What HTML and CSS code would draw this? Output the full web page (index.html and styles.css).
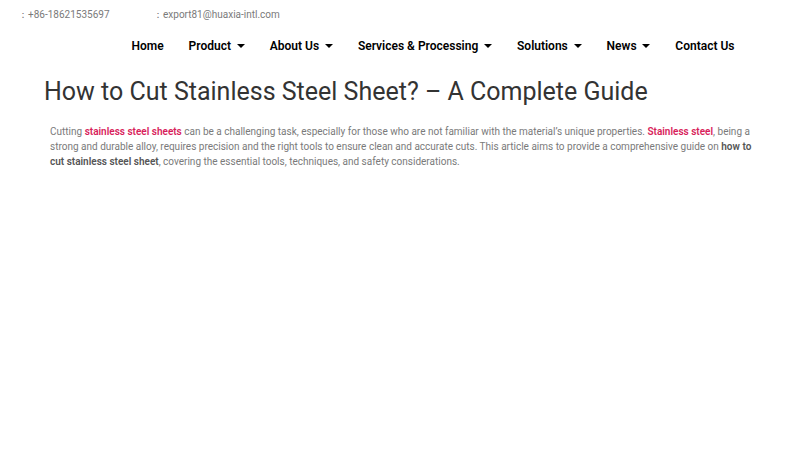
FILE: index.html
```html
<!DOCTYPE html>
<html lang="en">
<head>
    <meta charset="UTF-8">
    <meta name="viewport" content="width=device-width, initial-scale=1.0">
    <title>How to Cut Stainless Steel Sheet? – A Complete Guide</title>
    <link rel="stylesheet" href="styles.css">
</head>
<body>

<div class="topbar">
    <span class="contact phone">：+86-18621535697</span>
    <span class="contact mail">：export81@huaxia-intl.com</span>
</div>

<nav class="menu">
    <a class="menu-item" href="#">Home</a>
    <a class="menu-item" href="#">Product <span class="caret"></span></a>
    <a class="menu-item" href="#">About Us <span class="caret"></span></a>
    <a class="menu-item" href="#">Services &amp; Processing <span class="caret"></span></a>
    <a class="menu-item" href="#">Solutions <span class="caret"></span></a>
    <a class="menu-item" href="#">News <span class="caret"></span></a>
    <a class="menu-item" href="#">Contact Us</a>
</nav>

<div class="post">
    <h1 class="post-title">How to Cut Stainless Steel Sheet? – A Complete Guide</h1>
    <p class="post-text">Cutting <a href="#" class="hl">stainless steel sheets</a> can be a challenging task, especially for those who are not familiar with the material’s unique properties. <a href="#" class="hl">Stainless steel</a>, being a strong and durable alloy, requires precision and the right tools to ensure clean and accurate cuts. This article aims to provide a comprehensive guide on <strong>how to cut stainless steel sheet</strong>, covering the essential tools, techniques, and safety considerations.</p>
</div>

</body>
</html>
```

FILE: styles.css
```css
body {
    font-family: Roboto, "Liberation Sans", sans-serif;
    margin: 0;
    background: #fff;
}
.topbar {
    display: flex;
    height: 29px;
    align-items: center;
    padding-left: 18px;
    font-size: 10px;
    color: #7a7a7a;
}
.contact.phone {
    width: 135px;
}
.menu {
    display: flex;
    justify-content: flex-end;
    padding-right: 53px;
    height: 34px;
    align-items: center;
}
.menu-item {
    color: #000;
    text-decoration: none;
    font-size: 12px;
    font-weight: 600;
    padding: 0 12.5px;
    display: flex;
    align-items: center;
}
.caret {
    display: inline-block;
    width: 0;
    height: 0;
    border-left: 4px solid transparent;
    border-right: 4px solid transparent;
    border-top: 4px solid #000;
    margin-left: 5.8px;
}
.post {
    padding: 0 44px;
}
.post-title {
    font-size: 25px;
    font-weight: 400;
    color: #333;
    margin: 12px 0 0;
    line-height: 34px;
}
.post-text {
    margin: 15px 0 0 6px;
    font-size: 10px;
    line-height: 15px;
    color: #7a7a7a;
}
.hl {
    color: #d81e5b;
    font-weight: 600;
    text-decoration: none;
}
.post-text strong {
    color: #555;
    font-weight: 600;
}
```
